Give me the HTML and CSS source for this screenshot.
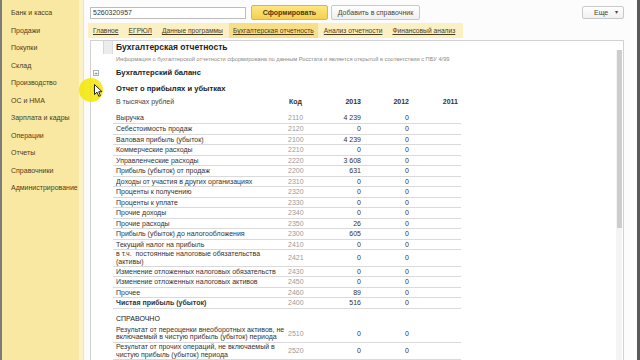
FILE: index.html
```html
<!DOCTYPE html>
<html lang="ru">
<head>
<meta charset="utf-8">
<link rel="stylesheet" href="styles.css">
</head>
<body>
<div class="app">
  <nav class="sidebar">
    <a class="nav-item">Банк и касса</a>
    <a class="nav-item">Продажи</a>
    <a class="nav-item">Покупки</a>
    <a class="nav-item">Склад</a>
    <a class="nav-item">Производство</a>
    <a class="nav-item">ОС и НМА</a>
    <a class="nav-item">Зарплата и кадры</a>
    <a class="nav-item">Операции</a>
    <a class="nav-item">Отчеты</a>
    <a class="nav-item">Справочники</a>
    <a class="nav-item">Администрирование</a>
  </nav>
  <main class="main">
    <div class="toolbar">
      <div class="field">5260320957</div>
      <button class="btn btn-primary">Сформировать</button>
      <button class="btn btn-add">Добавить в справочник</button>
      <div class="spacer"></div>
      <button class="btn btn-more"><span>Еще</span><span class="caret">▾</span></button>
    </div>
    <div class="tabs">
      <a class="tab">Главное</a>
      <a class="tab">ЕГРЮЛ</a>
      <a class="tab">Данные программы</a>
      <a class="tab active">Бухгалтерская отчетность</a>
      <a class="tab">Анализ отчетности</a>
      <a class="tab">Финансовый анализ</a>
    </div>
    <div class="panel">
      <div class="row row-title">
        <div class="gut"></div>
        <div class="title-mark"></div>
        <div class="title">Бухгалтерская отчетность</div>
      </div>
      <div class="row row-info">
        <div class="gut"></div>
        <div class="info">Информация о бухгалтерской отчетности сформирована по данным Росстата и является открытой в соответствии с ПБУ 4/99</div>
      </div>
      <div class="row row-section">
        <div class="gut"><span class="tree">+</span></div>
        <div class="section">Бухгалтерский баланс</div>
      </div>
      <div class="row row-section">
        <div class="gut"><span class="tree">−</span></div>
        <div class="section">Отчет о прибылях и убытках</div>
      </div>
      <div class="row">
        <div class="gut"></div>
        <table class="report">
          <colgroup>
            <col class="c-label"><col class="c-code"><col class="c-y1"><col class="c-y2"><col class="c-y3">
          </colgroup>
          <thead>
            <tr><th class="label">В тысячах рублей</th><th class="code">Код</th><th class="num">2013</th><th class="num">2012</th><th class="num last">2011</th></tr>
          </thead>
          <tbody>
            <tr><td class="label">Выручка</td><td class="code">2110</td><td class="num">4 239</td><td class="num">0</td><td class="num last"></td></tr>
            <tr><td class="label">Себестоимость продаж</td><td class="code">2120</td><td class="num">0</td><td class="num">0</td><td class="num last"></td></tr>
            <tr><td class="label">Валовая прибыль (убыток)</td><td class="code">2100</td><td class="num">4 239</td><td class="num">0</td><td class="num last"></td></tr>
            <tr><td class="label">Коммерческие расходы</td><td class="code">2210</td><td class="num">0</td><td class="num">0</td><td class="num last"></td></tr>
            <tr><td class="label">Управленческие расходы</td><td class="code">2220</td><td class="num">3 608</td><td class="num">0</td><td class="num last"></td></tr>
            <tr><td class="label">Прибыль (убыток) от продаж</td><td class="code">2200</td><td class="num">631</td><td class="num">0</td><td class="num last"></td></tr>
            <tr><td class="label">Доходы от участия в других организациях</td><td class="code">2310</td><td class="num">0</td><td class="num">0</td><td class="num last"></td></tr>
            <tr><td class="label">Проценты к получению</td><td class="code">2320</td><td class="num">0</td><td class="num">0</td><td class="num last"></td></tr>
            <tr><td class="label">Проценты к уплате</td><td class="code">2330</td><td class="num">0</td><td class="num">0</td><td class="num last"></td></tr>
            <tr><td class="label">Прочие доходы</td><td class="code">2340</td><td class="num">0</td><td class="num">0</td><td class="num last"></td></tr>
            <tr><td class="label">Прочие расходы</td><td class="code">2350</td><td class="num">26</td><td class="num">0</td><td class="num last"></td></tr>
            <tr><td class="label">Прибыль (убыток) до налогообложения</td><td class="code">2300</td><td class="num">605</td><td class="num">0</td><td class="num last"></td></tr>
            <tr><td class="label">Текущий налог на прибыль</td><td class="code">2410</td><td class="num">0</td><td class="num">0</td><td class="num last"></td></tr>
            <tr class="double"><td class="label">в т.ч.&nbsp; постоянные налоговые обязательства<br>(активы)</td><td class="code">2421</td><td class="num">0</td><td class="num">0</td><td class="num last"></td></tr>
            <tr><td class="label">Изменение отложенных налоговых обязательств</td><td class="code">2430</td><td class="num">0</td><td class="num">0</td><td class="num last"></td></tr>
            <tr><td class="label">Изменение отложенных налоговых активов</td><td class="code">2450</td><td class="num">0</td><td class="num">0</td><td class="num last"></td></tr>
            <tr><td class="label">Прочее</td><td class="code">2460</td><td class="num">89</td><td class="num">0</td><td class="num last"></td></tr>
            <tr><td class="label strong">Чистая прибыль (убыток)</td><td class="code">2400</td><td class="num">516</td><td class="num">0</td><td class="num last"></td></tr>
            <tr class="group"><td class="label" colspan="5">СПРАВОЧНО</td></tr>
            <tr class="double2"><td class="label">Результат от переоценки внеоборотных активов, не<br>включаемый в чистую прибыль (убыток) периода</td><td class="code">2510</td><td class="num">0</td><td class="num">0</td><td class="num last"></td></tr>
            <tr class="double2"><td class="label">Результат от прочих операций, не включаемый в<br>чистую прибыль (убыток) периода</td><td class="code">2520</td><td class="num">0</td><td class="num">0</td><td class="num last"></td></tr>
          </tbody>
        </table>
      </div>
      <div class="scrollbar"><div class="thumb"></div></div>
    </div>
  </main>
</div>
<div class="cursor-spot"></div>
<svg class="pointer" width="9" height="13" viewBox="0 0 9 13"><path d="M0.5 0.5 L0.5 10.5 L3 8.2 L4.8 12.3 L6.4 11.6 L4.7 7.7 L8 7.7 Z" fill="#fff" stroke="#111" stroke-width="0.9" stroke-linejoin="round"/></svg>
</body>
</html>
```

FILE: styles.css
```css
* { box-sizing: border-box; }
html, body { margin: 0; padding: 0; }
body {
  width: 640px;
  height: 360px;
  overflow: hidden;
  font-family: "Liberation Sans", Arial, sans-serif;
  background: #fcfcfc;
  position: relative;
}
.app {
  display: flex;
  height: 360px;
}
.sidebar {
  width: 83px;
  flex: none;
  background: #f9e8a1;
  border-left: 2px solid #7c7c7c;
  border-right: 4px solid #fcf2c8;
  padding-top: 4px;
  display: flex;
  flex-direction: column;
}
.nav-item {
  display: block;
  height: 17.5px;
  line-height: 17.5px;
  padding-left: 9px;
  font-size: 7px;
  color: #4a3d1d;
  white-space: nowrap;
}
.main {
  flex: 1;
  min-width: 0;
  border-left: 1px solid #e2e2dc;
  border-right: 3px solid #5a5a5a;
  padding: 5px 13px 0 6px;
  display: flex;
  flex-direction: column;
}
.toolbar {
  display: flex;
  align-items: center;
  height: 15px;
  gap: 4px;
}
.field {
  width: 156px;
  height: 12px;
  border: 1px solid #bdbdbd;
  background: #fff;
  font-size: 7px;
  line-height: 10px;
  padding-left: 2px;
  color: #333;
  margin-right: 1px;
}
.btn {
  height: 15px;
  border: 1px solid #c9c9c9;
  border-radius: 2px;
  background: linear-gradient(#ffffff, #f0f0f0);
  font-family: inherit;
  font-size: 7px;
  color: #444;
  padding: 0 7px;
  line-height: 13px;
}
.btn-add { width: 89px; padding: 0; margin-left: -1px; }
.btn-primary {
  width: 77px;
  background: linear-gradient(#fde682, #f4d04e);
  border-color: #d6b552;
  font-weight: bold;
  color: #4a3a10;
  font-size: 7px;
}
.btn-more {
  width: 42px;
  height: 13px;
  padding: 0 5px 0 11px;
  display: flex;
  align-items: center;
  justify-content: space-between;
  line-height: 11px;
}
.caret { font-size: 6px; }
.spacer { flex: 1; }
.tabs {
  margin: 3px 0 0 -2px;
  width: 375px;
  height: 15px;
  background: #fbf0c3;
  display: flex;
  align-items: stretch;
  padding-left: 1px;
  gap: 2px;
}
.tab {
  padding: 0 4px;
  font-size: 6.7px;
  line-height: 15px;
  color: #4a3d1d;
  text-decoration: underline;
  white-space: nowrap;
}
.tab.active { background: #f6df86; }
.panel {
  margin-top: 2px;
  flex: 1;
  border: 1px solid #d2d2d2;
  border-bottom: none;
  background: #fff;
  position: relative;
  overflow: hidden;
}
.row {
  display: flex;
  align-items: stretch;
}
.gut {
  width: 12px;
  flex: none;
  position: relative;
}
.row-title { height: 13px; }
.title-mark {
  width: 10px;
  flex: none;
  background: #ececec;
  border-left: 1px solid #d6d6d6;
  border-right: 1px solid #dcdcdc;
  margin-right: 3px;
}
.title {
  font-size: 8.5px;
  font-weight: bold;
  color: #222;
  line-height: 13px;
  white-space: nowrap;
}
.row-info { height: 10px; }
.info {
  padding-left: 13px;
  font-size: 5.7px;
  line-height: 10px;
  color: #8a8a8a;
  white-space: nowrap;
}
.row-section { height: 14px; margin-top: 2px; }
.section {
  padding-left: 13px;
  font-size: 7.6px;
  font-weight: bold;
  line-height: 14px;
  color: #222;
  white-space: nowrap;
}
.tree {
  position: absolute;
  left: 2px;
  top: 4px;
  width: 6px;
  height: 6px;
  border: 1px solid #b0b0b0;
  background: #fff;
  font-size: 6px;
  line-height: 4px;
  text-align: center;
  color: #666;
}
.report {
  margin-left: 10px;
  width: 348px;
  border-collapse: collapse;
  table-layout: fixed;
  font-size: 7px;
  color: #333;
}
.c-label { width: 174px; }
.c-code { width: 30px; }
.c-y1 { width: 45px; }
.c-y2 { width: 48px; }
.c-y3 { width: 51px; }
.report th {
  height: 17px;
  line-height: 12px;
  vertical-align: top;
  padding: 0;
  font-weight: bold;
  color: #333;
}
.report th.label { font-weight: normal; text-align: left; padding-left: 3px; color: #444; }
.report th.code { text-align: left; padding-left: 2px; }
.report td {
  height: 10.5px;
  padding: 0;
  line-height: 9.5px;
  border-bottom: 1px solid #dadada;
  white-space: nowrap;
}
.report .label { padding-left: 3px; text-align: left; }
.report td.code { color: #9a9a9a; padding-left: 1px; }
.report .num { text-align: right; padding-right: 1px; }
.report .num.last { padding-right: 3px; }
.report .strong { font-weight: bold; }
.report tr.double td { height: 16.5px; line-height: 7.5px; }
.report tr.double2 td { height: 17px; line-height: 7.3px; }
.report tr.group td {
  height: 17px;
  border-bottom: none;
  vertical-align: top;
  padding-top: 6px;
  line-height: 8px;
  font-weight: normal;
  color: #222;
}
.scrollbar {
  position: absolute;
  right: 1px;
  top: 9px;
  width: 6px;
  bottom: 0;
  background: #f4f4f4;
}
.thumb {
  height: 178px;
  margin: 0 0.5px;
  background: #cdcdcd;
}
.cursor-spot {
  position: absolute;
  left: 79px;
  top: 78px;
  width: 24px;
  height: 24px;
  border-radius: 50%;
  background: rgba(244, 230, 0, 0.85);
}
.pointer {
  position: absolute;
  left: 94px;
  top: 84px;
}
```
